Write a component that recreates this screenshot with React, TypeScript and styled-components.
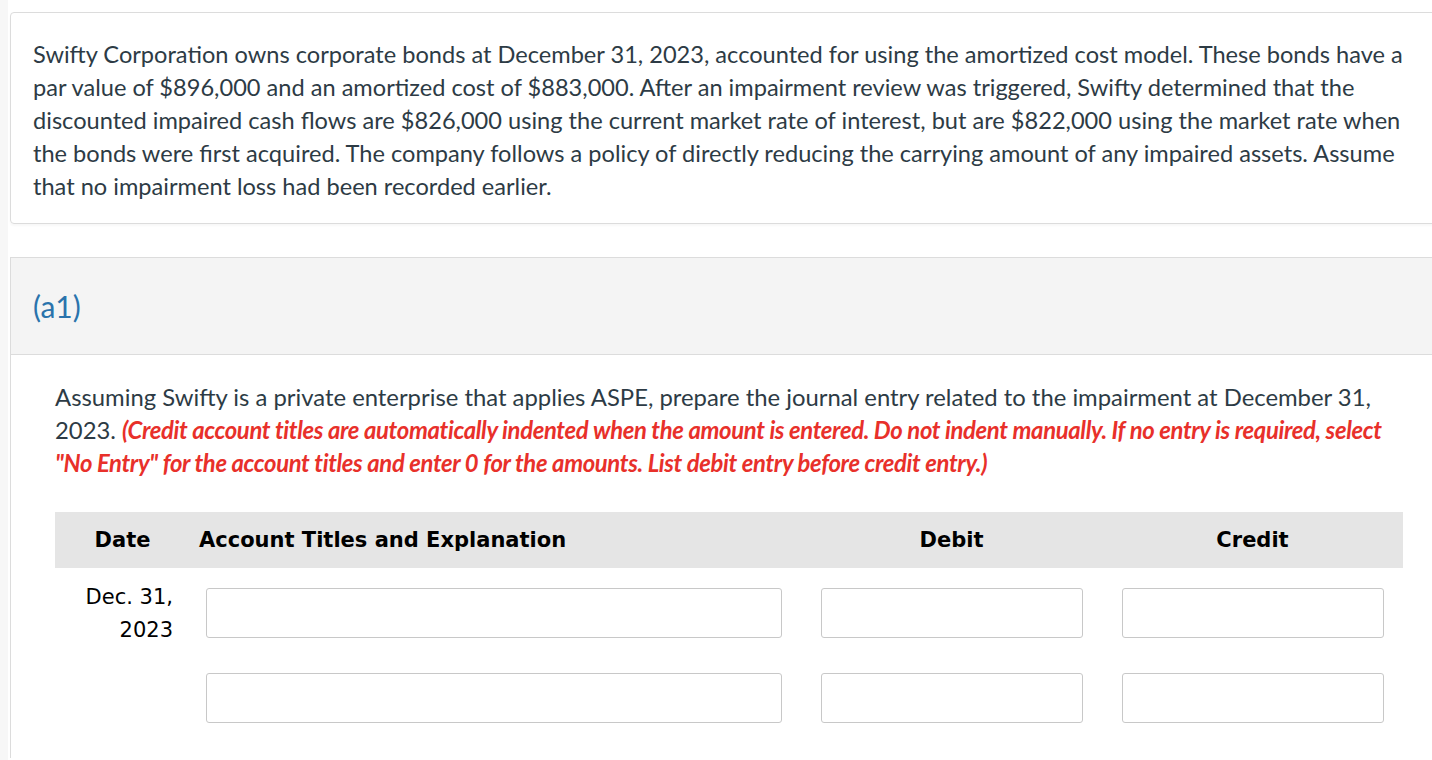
import React from 'react';
import styled, { createGlobalStyle } from 'styled-components';

const GlobalStyle = createGlobalStyle`
  html, body {
    margin: 0;
    padding: 0;
    background: #fff;
    overflow: hidden;
  }
  * {
    box-sizing: border-box;
  }
`;

const rows = [{ date: ['Dec. 31,', '2023'] }, { date: [] as string[] }];

const App = () => {
  return (
    <Page>
      <GlobalStyle />
      <Gutter />
      <Content>
        <ProblemCard>
          Swifty Corporation owns corporate bonds at December 31, 2023, accounted for using the
          amortized cost model. These bonds have a par value of $896,000 and an amortized cost of
          $883,000. After an impairment review was triggered, Swifty determined that the discounted
          impaired cash flows are $826,000 using the current market rate of interest, but are
          $822,000 using the market rate when the bonds were first acquired. The company follows a
          policy of directly reducing the carrying amount of any impaired assets. Assume that no
          impairment loss had been recorded earlier.
        </ProblemCard>

        <PartBox>
          <PartHeader>(a1)</PartHeader>
          <PartBody>
            <Instruction>
              Assuming Swifty is a private enterprise that applies ASPE, prepare the journal entry
              related to the impairment at December 31, 2023.{' '}
              <Note>
                (Credit account titles are automatically indented when the amount is entered. Do not
                indent manually. If no entry is required, select "No Entry" for the account titles
                and enter 0 for the amounts. List debit entry before credit entry.)
              </Note>
            </Instruction>

            <Journal>
              <HeadCell $align="center">Date</HeadCell>
              <HeadCell $align="left" $pad="0 0 0 9px">
                Account Titles and Explanation
              </HeadCell>
              <HeadCell $align="center">Debit</HeadCell>
              <HeadCell $align="center">Credit</HeadCell>

              {rows.map((row, i) => (
                <React.Fragment key={i}>
                  <DateCell>
                    {row.date.map((d) => (
                      <div key={d}>{d}</div>
                    ))}
                  </DateCell>
                  <InputCell $pad="0 19px 0 16px">
                    <EntryInput type="text" />
                  </InputCell>
                  <InputCell $pad="0 19px 0 20px">
                    <EntryInput type="text" />
                  </InputCell>
                  <InputCell $pad="0 19px 0 20px">
                    <EntryInput type="text" />
                  </InputCell>
                </React.Fragment>
              ))}
            </Journal>
          </PartBody>
        </PartBox>
      </Content>
    </Page>
  );
};

export default App;

const Page = styled.div`
  display: flex;
  width: 100%;
  min-height: 760px;
`;

const Gutter = styled.div`
  flex: 0 0 8px;
  background-color: #f7f7f7;
`;

const Content = styled.div`
  flex: 1;
  padding: 12px 0 0 2px;
  margin-right: -20px;
`;

const ProblemCard = styled.div`
  border: 1px solid #dcdcdc;
  border-radius: 4px;
  box-shadow: 0 2px 2px rgba(0, 0, 0, 0.03);
  padding: 25px 32px 20px 22px;
  font-family: Lato, 'Noto Sans', sans-serif;
  font-size: 23.6px;
  line-height: 33px;
  color: #2d3b45;
`;

const PartBox = styled.section`
  margin-top: 33px;
  border-left: 1px solid #dcdcdc;
  border-top: 1px solid #dcdcdc;
`;

const PartHeader = styled.div`
  height: 97px;
  display: flex;
  align-items: center;
  padding-left: 22px;
  background-color: #f4f4f4;
  border-bottom: 1px solid #dcdcdc;
  font-family: Lato, 'Noto Sans', sans-serif;
  font-size: 30px;
  color: #2a73ac;
`;

const PartBody = styled.div`
  padding: 25px 0 0 44px;
`;

const Instruction = styled.p`
  margin: 0;
  max-width: 1335px;
  font-family: Lato, 'Noto Sans', sans-serif;
  font-size: 23.85px;
  line-height: 33px;
  color: #2d3b45;
`;

const Note = styled.span`
  font-weight: 700;
  font-style: italic;
  color: #e8302a;
  letter-spacing: -0.35px;
`;

const Journal = styled.div`
  display: grid;
  grid-template-columns: 135px 611px 301px 301px;
  margin-top: 33px;
  font-family: 'DejaVu Sans', Verdana, sans-serif;
  font-size: 21px;
  color: #000;
`;

const HeadCell = styled.div<{ $align: string; $pad?: string }>`
  height: 56px;
  display: flex;
  align-items: center;
  justify-content: ${(p) => (p.$align === 'center' ? 'center' : 'flex-start')};
  padding: ${(p) => p.$pad || '0'};
  background-color: #e5e5e5;
  font-weight: 700;
  margin-bottom: 20px;
`;

const DateCell = styled.div`
  height: 50px;
  text-align: right;
  padding-right: 17px;
  line-height: 33px;
  margin-top: -7px;
`;

const InputCell = styled.div<{ $pad: string }>`
  padding: ${(p) => p.$pad};
  margin-bottom: 35px;
`;

const EntryInput = styled.input`
  display: block;
  width: 100%;
  height: 50px;
  border: 1px solid #c8c8c8;
  border-radius: 3px;
  background: #fff;
  outline: none;
`;
